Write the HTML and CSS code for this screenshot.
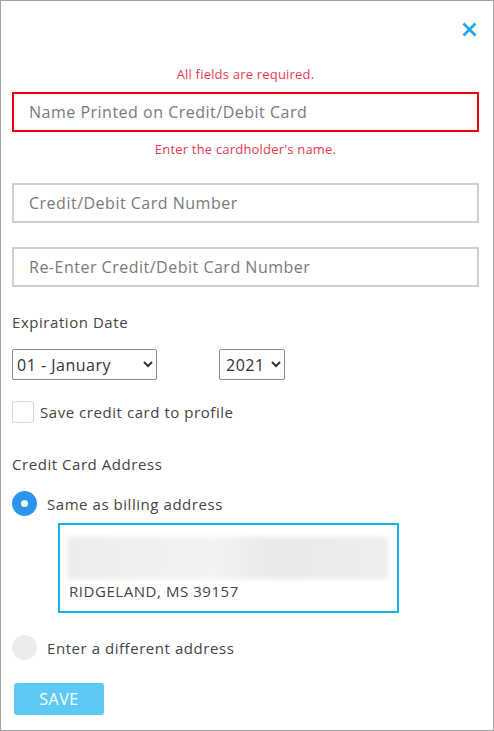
FILE: index.html
```html
<!DOCTYPE html>
<html lang="en">
<head>
<meta charset="UTF-8" />
<meta name="viewport" content="width=device-width, initial-scale=1" />
<title>Add Credit Card</title>
<link rel="stylesheet" href="styles.css">
</head>
<body>

<div class="modal">
  <div class="modal-header">
    <button class="close-btn" title="Close">
      <svg width="15" height="15" viewBox="0 0 15 15"><path d="M1.5 1.5 L13.5 13.5 M13.5 1.5 L1.5 13.5" stroke="#1ba6e6" stroke-width="2.6" fill="none"/></svg>
    </button>
  </div>

  <form class="card-form">
    <div class="form-error">All fields are required.</div>
    <input class="text-field invalid" type="text" placeholder="Name Printed on Credit/Debit Card">
    <div class="field-error">Enter the cardholder's name.</div>

    <input class="text-field" type="text" placeholder="Credit/Debit Card Number">
    <input class="text-field second" type="text" placeholder="Re-Enter Credit/Debit Card Number">

    <div class="label">Expiration Date</div>
    <div class="expiry">
      <select class="month">
        <option>01 - January</option>
        <option>02 - February</option>
      </select>
      <select class="year">
        <option>2021</option>
        <option>2022</option>
      </select>
    </div>

    <label class="check-row">
      <span class="checkbox"></span>
      Save credit card to profile
    </label>

    <div class="label address-label">Credit Card Address</div>

    <div class="radio-row">
      <span class="radio checked"></span>
      Same as billing address
    </div>
    <div class="address-box">
      <div class="blurred"></div>
      <div class="city">RIDGELAND, MS 39157</div>
    </div>

    <div class="radio-row other">
      <span class="radio"></span>
      Enter a different address
    </div>

    <button type="button" class="save-btn">SAVE</button>
  </form>
</div>

</body>
</html>
```

FILE: styles.css
```css
* {
  box-sizing: border-box;
}
body, html {
  margin: 0; padding: 0;
  background: #fff;
  font-family: 'Open Sans', 'Lato', sans-serif;
  letter-spacing: 0.55px;
  color: #444;
}
.modal {
  height: 731px;
  border: 1px solid #a3a3a3;
  padding: 0 14px 0 11px;
}
.modal-header {
  display: flex;
  justify-content: flex-end;
  height: 65px;
  padding-top: 21px;
  padding-right: 2px;
}
.close-btn {
  border: 0;
  background: none;
  padding: 0;
  width: 15px;
  height: 15px;
  cursor: pointer;
}
.card-form {
  display: flex;
  flex-direction: column;
}
.form-error, .field-error {
  color: #e63a4f;
  font-size: 13px;
  line-height: 16px;
  height: 16px;
  letter-spacing: 0.2px;
  text-align: center;
}
.form-error {
  margin-bottom: 10px;
}
.field-error {
  margin-top: 9px;
  margin-bottom: 26px;
}
.text-field {
  width: 100%;
  height: 40px;
  flex: none;
  border: 2px solid #d0d0d0;
  padding: 0 15px;
  font-family: inherit;
  font-size: 16px;
  letter-spacing: 0.5px;
  color: #333;
  outline: none;
}
.text-field::placeholder {
  color: #7a7a7a;
}
.text-field.invalid {
  border-color: #e8000b;
}
.text-field.second {
  margin-top: 24px;
}
.label {
  font-size: 15px;
  line-height: 18px;
  height: 18px;
  margin-top: 26px;
  color: #444;
}
.expiry {
  display: flex;
  gap: 62px;
  margin-top: 18px;
}
.expiry select {
  height: 31px;
  font-family: inherit;
  font-size: 16px;
  letter-spacing: 0.5px;
  color: #333;
  border: 1px solid #8a8a8a;
  border-radius: 2px;
  background: #fff;
  padding: 0;
}
.month {
  width: 145px;
}
.year {
  width: 66px;
  padding-left: 2px !important;
}
.check-row {
  display: flex;
  align-items: center;
  gap: 6px;
  height: 22px;
  margin-top: 21px;
  font-size: 15px;
  color: #444;
}
.checkbox {
  width: 22px;
  height: 22px;
  border: 1px solid #d8d8d8;
  border-radius: 3px;
  display: inline-block;
}
.address-label {
  margin-top: 32px;
}
.radio-row {
  display: flex;
  align-items: center;
  gap: 10px;
  height: 25px;
  font-size: 15px;
  color: #444;
  margin-top: 18px;
}
.radio {
  width: 25px;
  height: 25px;
  border-radius: 50%;
  background: #ececec;
  display: inline-block;
  position: relative;
}
.radio.checked {
  background: #2b95ee;
}
.radio.checked::after {
  content: '';
  position: absolute;
  left: 9px;
  top: 9px;
  width: 7px;
  height: 7px;
  border-radius: 50%;
  background: #fff;
}
.address-box {
  margin: 7px 0 0 46px;
  width: 341px;
  height: 90px;
  flex: none;
  border: 2px solid #18b0ea;
  padding: 12px 9px 0 7px;
  overflow: hidden;
}
.blurred {
  height: 42px;
  background: linear-gradient(90deg, #ececec 0%, #f3f3f3 45%, #e9e9e9 65%, #eeeeee 100%);
  filter: blur(2px);
}
.city {
  margin-top: 2px;
  padding-left: 2px;
  font-size: 15px;
  line-height: 20px;
  color: #444;
}
.radio-row.other {
  margin-top: 22px;
}
.save-btn {
  align-self: flex-start;
  margin: 23px 0 0 2px;
  width: 90px;
  height: 32px;
  border: 0;
  border-radius: 3px;
  background: #5ccaf5;
  color: #fff;
  font-family: inherit;
  font-size: 16px;
  letter-spacing: 0.5px;
}
```
